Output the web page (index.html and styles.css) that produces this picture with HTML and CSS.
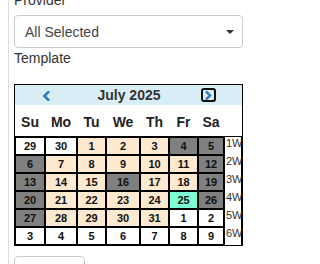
FILE: index.html
```html
<!DOCTYPE html>
<html>
<head>
<meta charset="utf-8">
<link rel="stylesheet" href="styles.css">
</head>
<body>
<div class="panel">
  <div class="label label-top">Provider</div>
  <div class="select">
    <span class="select-text">All Selected</span>
    <svg class="caret" width="8" height="4" viewBox="0 0 8 4"><path d="M0 0H8L4 4Z" fill="#333"/></svg>
  </div>
  <div class="label">Template</div>
  <div class="calendar">
    <div class="cal-head">
      <svg class="prev" width="8" height="10" viewBox="0 0 8 10"><path d="M6.2 1.2 2.4 5 6.2 8.8" fill="none" stroke="#337ab7" stroke-width="2.6" stroke-linecap="square"/></svg>
      <div class="cal-title">July 2025</div>
      <div class="next"><svg width="7" height="9" viewBox="0 0 7 9"><path d="M1.8 1.2 5 4.5 1.8 7.8" fill="none" stroke="#337ab7" stroke-width="2.4" stroke-linecap="square"/></svg></div>
    </div>
    <div class="dow">
      <div>Su</div><div>Mo</div><div>Tu</div><div>We</div><div>Th</div><div>Fr</div><div>Sa</div><div></div>
    </div>
    <div class="days">
      <div class="d">29</div><div class="d">30</div><div class="d m">1</div><div class="d m">2</div><div class="d m">3</div><div class="d g">4</div><div class="d g">5</div><div class="wk">1W</div>
      <div class="d g">6</div><div class="d m">7</div><div class="d m">8</div><div class="d m">9</div><div class="d m">10</div><div class="d m">11</div><div class="d g">12</div><div class="wk">2W</div>
      <div class="d g">13</div><div class="d m">14</div><div class="d m">15</div><div class="d g">16</div><div class="d m">17</div><div class="d m">18</div><div class="d g">19</div><div class="wk">3W</div>
      <div class="d g">20</div><div class="d m">21</div><div class="d m">22</div><div class="d m">23</div><div class="d m">24</div><div class="d t">25</div><div class="d g">26</div><div class="wk">4W</div>
      <div class="d g">27</div><div class="d m">28</div><div class="d m">29</div><div class="d m">30</div><div class="d m">31</div><div class="d">1</div><div class="d">2</div><div class="wk">5W</div>
      <div class="d">3</div><div class="d">4</div><div class="d">5</div><div class="d">6</div><div class="d">7</div><div class="d">8</div><div class="d">9</div><div class="wk">6W</div>
    </div>
  </div>
  <div class="btn"></div>
</div>
</body>
</html>
```

FILE: styles.css
```css
html, body {
  margin: 0;
  padding: 0;
  background: #fff;
  overflow: hidden;
}
body {
  font-family: "Liberation Sans", Arial, sans-serif;
  color: #333;
  height: 264px;
}
.panel {
  margin-left: 8px;
  border-left: 1px solid #dddddd;
  padding-left: 5px;
  width: 229px;
  height: 274px;
  margin-top: -10px;
  overflow: hidden;
}
.label {
  font-size: 14px;
  line-height: 20px;
  height: 20px;
  color: #333;
}
.label-top {
  margin-bottom: 5px;
}
.select {
  box-sizing: border-box;
  height: 33px;
  border: 1px solid #cccccc;
  border-radius: 4px;
  display: flex;
  align-items: center;
  justify-content: space-between;
  padding: 0 8px 0 10px;
  font-size: 14px;
  color: #444;
}
.select-text {
  padding-top: 1px;
}
.caret {
  display: block;
}
.calendar {
  margin-top: 16px;
  border: 1px solid #000;
  width: 227px;
}
.cal-head {
  height: 20px;
  background: #d9edf7;
  display: flex;
  align-items: center;
}
.prev {
  display: block;
  margin-left: 27px;
  margin-top: 1px;
}
.cal-title {
  flex: 1;
  text-align: center;
  font-weight: bold;
  font-size: 14px;
  color: #333;
  padding-left: 7px;
}
.next {
  box-sizing: border-box;
  width: 15px;
  height: 14px;
  border: 2px solid #111;
  border-radius: 3px;
  margin-right: 26px;
  display: flex;
  align-items: center;
  justify-content: center;
}
.next svg {
  display: block;
}
.dow, .days {
  display: grid;
  grid-template-columns: 30px 32px 29px 34px 29px 29px 26px 18px;
}
.dow {
  height: 31px;
  border-bottom: 1px solid #000;
  font-size: 14px;
  font-weight: bold;
  color: #222;
}
.dow div {
  text-align: center;
  line-height: 31px;
  padding-top: 2px;
}
.d {
  box-sizing: border-box;
  height: 18px;
  border: 1px solid #000;
  text-align: center;
  font-size: 11px;
  font-weight: bold;
  line-height: 16px;
  color: #111;
  background: #fff;
}
.m { background: #fde9cf; }
.g { background: #808080; }
.t { background: #7fffd4; }
.wk {
  box-sizing: border-box;
  height: 18px;
  border-left: 1px solid #000;
  border-right: 1px solid #000;
  font-size: 11px;
  line-height: 11px;
  padding-left: 1px;
  padding-top: 1px;
  color: #333;
}
.btn {
  margin-top: 10px;
  width: 71px;
  height: 34px;
  box-sizing: border-box;
  border: 1px solid #cccccc;
  border-radius: 4px;
  background: #fff;
}
```
